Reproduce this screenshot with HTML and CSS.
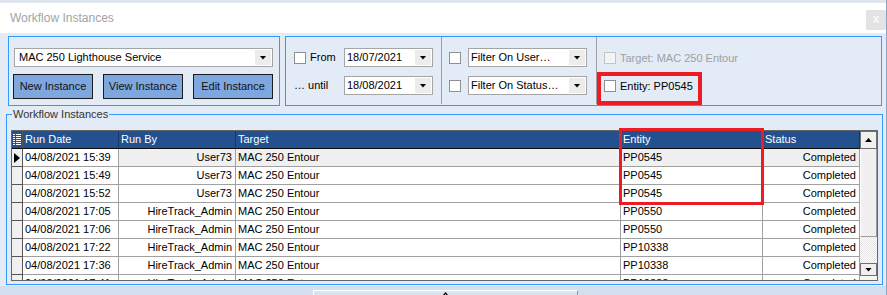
FILE: index.html
```html
<!DOCTYPE html>
<html>
	<head>
		<title>Workflow Instances</title>
		<link rel="stylesheet" href="styles.css">
	</head>
	<body>
		<div class="window">
			<div class="titlebar">
				<span class="title">Workflow Instances</span>
				<span class="closebtn">x</span>
			</div>
			<div class="toolbar">
				<div class="panel template">
					<div class="combo wide"><span>MAC 250 Lighthouse Service</span><i class="drop"></i></div>
					<div class="buttons">
						<button>New Instance</button>
						<button>View Instance</button>
						<button>Edit Instance</button>
					</div>
				</div>
				<div class="panel filters">
					<div class="section dates">
						<div class="frow">
							<span class="lead"><i class="check"></i>From</span>
							<div class="combo date"><span>18/07/2021</span><i class="drop"></i></div>
						</div>
						<div class="frow">
							<span class="lead">&hellip; until</span>
							<div class="combo date"><span>18/08/2021</span><i class="drop"></i></div>
						</div>
					</div>
					<div class="section users">
						<div class="frow">
							<i class="check"></i>
							<div class="combo pick"><span>Filter On User&hellip;</span><i class="drop"></i></div>
						</div>
						<div class="frow">
							<i class="check"></i>
							<div class="combo pick"><span>Filter On Status&hellip;</span><i class="drop"></i></div>
						</div>
					</div>
					<div class="section scope">
						<div class="crow disabled"><i class="check"></i>Target: MAC 250 Entour</div>
						<div class="marked">
							<div class="crow"><i class="check"></i>Entity: PP0545</div>
						</div>
					</div>
				</div>
			</div>
			<div class="groupbox">
				<span class="legend">Workflow Instances</span>
				<div class="grid">
					<div class="cells">
						<div class="row head">
							<div class="ind">
								<svg width="8" height="11" viewBox="0 0 8 11"><g fill="#fff"><rect x="0" y="0" width="2" height="1"/><rect x="3" y="0" width="5" height="1"/><rect x="0" y="2" width="2" height="1"/><rect x="3" y="2" width="5" height="1"/><rect x="0" y="4" width="2" height="1"/><rect x="3" y="4" width="5" height="1"/><rect x="0" y="6" width="2" height="1"/><rect x="3" y="6" width="5" height="1"/><rect x="0" y="8" width="2" height="1"/><rect x="3" y="8" width="5" height="1"/><rect x="0" y="10" width="2" height="1"/><rect x="3" y="10" width="5" height="1"/></g></svg>
							</div>
							<div>Run Date</div><div>Run By</div><div>Target</div><div>Entity</div><div>Status</div>
						</div>
						<div class="row current">
							<div class="ind"><svg width="6" height="10" viewBox="0 0 6 10"><polygon points="0,0 6,5 0,10" fill="#000"/></svg></div>
							<div class="focus">04/08/2021 15:39</div><div class="num">User73</div><div>MAC 250 Entour</div><div>PP0545</div><div class="num">Completed</div>
						</div>
						<div class="row">
							<div class="ind"></div>
							<div>04/08/2021 15:49</div><div class="num">User73</div><div>MAC 250 Entour</div><div>PP0545</div><div class="num">Completed</div>
						</div>
						<div class="row">
							<div class="ind"></div>
							<div>04/08/2021 15:52</div><div class="num">User73</div><div>MAC 250 Entour</div><div>PP0545</div><div class="num">Completed</div>
						</div>
						<div class="row">
							<div class="ind"></div>
							<div>04/08/2021 17:05</div><div class="num">HireTrack_Admin</div><div>MAC 250 Entour</div><div>PP0550</div><div class="num">Completed</div>
						</div>
						<div class="row">
							<div class="ind"></div>
							<div>04/08/2021 17:06</div><div class="num">HireTrack_Admin</div><div>MAC 250 Entour</div><div>PP0550</div><div class="num">Completed</div>
						</div>
						<div class="row">
							<div class="ind"></div>
							<div>04/08/2021 17:22</div><div class="num">HireTrack_Admin</div><div>MAC 250 Entour</div><div>PP10338</div><div class="num">Completed</div>
						</div>
						<div class="row">
							<div class="ind"></div>
							<div>04/08/2021 17:36</div><div class="num">HireTrack_Admin</div><div>MAC 250 Entour</div><div>PP10338</div><div class="num">Completed</div>
						</div>
						<div class="row">
							<div class="ind"></div>
							<div>04/08/2021 17:41</div><div class="num">HireTrack_Admin</div><div>MAC 250 Entour</div><div>PP10338</div><div class="num">Completed</div>
						</div>
					</div>
					<div class="scrollbar">
						<div class="sb-btn"><i class="tri up"></i></div>
						<div class="sb-thumb"></div>
						<div class="sb-track"></div>
						<div class="sb-btn down"><i class="tri"></i></div>
						<div class="sb-end"></div>
					</div>
					<div class="mark"></div>
				</div>
			</div>
			<div class="footer">
				<div class="splitter">
					<svg width="7" height="5" viewBox="0 0 7 5"><polyline points="0.5,4.5 3.5,1 6.5,4.5" fill="none" stroke="#000" stroke-width="1.2"/></svg>
				</div>
			</div>
		</div>
		<div class="behind"></div>
	</body>
</html>
```
FILE: styles.css
```css
body {
	margin: 0;
	display: flex;
	height: 295px;
	overflow: hidden;
	background: #f2f4f7;
	font: 11px/13px "Liberation Sans", Arial, sans-serif;
	color: #000;
}
.window {
	width: 886px;
	display: flex;
	flex-direction: column;
	background: #e3ebf6;
}
.behind {
	flex-grow: 1;
	border-left: 1px solid #8da4c0;
	background: #eef1f5;
}

/* title bar */
.titlebar {
	height: 30px;
	border-top: 3px solid #dfe5ec;
	background: #fff;
	display: flex;
	justify-content: space-between;
	padding-left: 10px;
}
.title {
	font-size: 12px;
	line-height: 30px;
	color: #a3a3a3;
}
.closebtn {
	width: 20px;
	height: 20px;
	margin-top: 7px;
	background: #e3e3e3;
	color: #fafafa;
	font-weight: bold;
	font-size: 12px;
	line-height: 19px;
	text-align: center;
}

/* top filter panels */
.toolbar {
	display: flex;
	gap: 5px;
	padding: 3px 0 0 8px;
}
.panel {
	box-sizing: border-box;
	height: 70px;
	border: 1px solid #3399ff;
}
.template {
	width: 272px;
	padding: 11px 6px 0 4px;
}
.combo {
	display: flex;
	align-items: center;
	box-sizing: border-box;
	height: 19px;
	border: 1px solid #a5a5a5;
	background: #fff;
}
.combo span {
	flex-grow: 1;
	padding-left: 2px;
	white-space: nowrap;
	overflow: hidden;
}
.combo.wide {
	margin-left: 1px;
}
.combo.wide span {
	padding-left: 4px;
}
.drop {
	width: 16px;
	height: 15px;
	margin-right: 1px;
	background: #ececec;
	display: flex;
	align-items: center;
	justify-content: center;
}
.drop::after, .tri {
	content: "";
	display: block;
	width: 7px;
	height: 4px;
	background: #000;
	clip-path: polygon(0 0, 100% 0, 50% 100%);
}
.tri.up {
	clip-path: polygon(50% 0, 100% 100%, 0 100%);
}
.buttons {
	display: flex;
	gap: 10px;
	margin-top: 7px;
}
.buttons button {
	width: 80px;
	height: 25px;
	padding: 0;
	border: 1px solid #1c1c1c;
	background: #7ea6df;
	color: #111;
	font: inherit;
}
.filters {
	width: 597px;
	display: flex;
}
.section {
	box-sizing: border-box;
	height: 67px;
}
.dates {
	width: 156px;
	padding: 11px 0 0 8px;
	border-right: 1px solid #a0a0a0;
}
.users {
	width: 155px;
	padding: 11px 0 0 7px;
	border-right: 1px solid #a0a0a0;
}
.frow {
	display: flex;
	align-items: center;
	height: 19px;
}
.frow + .frow {
	margin-top: 9px;
}
.lead {
	width: 50px;
	display: flex;
	align-items: center;
}
.check {
	display: block;
	box-sizing: border-box;
	width: 12px;
	height: 12px;
	border: 1px solid #8e8f8f;
	background: #fff;
	margin-right: 4px;
}
.users .check {
	margin-right: 7px;
}
.combo.date {
	width: 89px;
}
.combo.pick {
	width: 119px;
}
.scope {
	flex-grow: 1;
	padding-top: 15px;
}
.crow {
	display: flex;
	align-items: center;
	height: 12px;
	padding-left: 7px;
}
.crow.disabled {
	color: #a0a0a0;
}
.crow.disabled .check {
	border-color: #c4c4c4;
	background: #f4f4f4;
}
.marked {
	box-sizing: border-box;
	width: 105px;
	height: 33px;
	margin-top: 8px;
	border: 4px solid #ec1c24;
	padding-top: 4px;
}
.marked .crow {
	padding-left: 3px;
}

/* group box with grid */
.groupbox {
	position: relative;
	box-sizing: border-box;
	width: 877px;
	height: 171px;
	margin: 8px 0 0 6px;
	border: 1px solid #3399ff;
	padding: 15px 4px 3px 4px;
}
.legend {
	position: absolute;
	left: 5px;
	top: -7px;
	padding: 0 1px;
	background: #e3ebf6;
	color: #333;
}
.grid {
	position: relative;
	display: flex;
	box-sizing: border-box;
	width: 867px;
	height: 151px;
	border: 1px solid #666;
	background: #fff;
}
.cells {
	width: 848px;
	overflow: hidden;
}
.row {
	display: grid;
	grid-template-columns: 11px 96px 117px 385px 142px 97px;
	height: 18px;
}
.row > div {
	box-sizing: border-box;
	padding: 0 2px;
	border-right: 1px solid #a0a0a0;
	border-bottom: 1px solid #a0a0a0;
	line-height: 17px;
	white-space: nowrap;
	overflow: hidden;
}
.row > .num {
	text-align: right;
	padding-right: 3px;
}
.row > .ind {
	padding: 0;
	background: #f0f0f0;
	border-color: #555;
	display: flex;
	align-items: center;
	justify-content: center;
}
.head > div {
	background: #23508f;
	color: #fff;
	border-right-color: #17386b;
	border-bottom-color: #0d0d0d;
}
.head > .ind {
	background: #23508f;
	border-bottom-color: #0d0d0d;
}
.current > div {
	background: #f0f0f0;
}
.current > .focus {
	background: #fff;
}
.scrollbar {
	width: 17px;
	display: flex;
	flex-direction: column;
}
.sb-btn {
	box-sizing: border-box;
	height: 18px;
	border: 1px solid #6f6f6f;
	background: #f0f0f0;
	display: flex;
	align-items: center;
	justify-content: center;
}
.sb-btn.down {
	height: 13px;
}
.sb-thumb {
	box-sizing: border-box;
	height: 88px;
	background: #f0f0f0;
	border-left: 1px solid #fff;
	border-right: 1px solid #9a9a9a;
	border-bottom: 1px solid #9a9a9a;
}
.sb-track {
	flex-grow: 1;
	background: repeating-conic-gradient(#e4e4e4 0 25%, #fff 0 50%) 0 0 / 2px 2px;
}
.sb-end {
	height: 4px;
	background: #f6f6f6;
}
.mark {
	position: absolute;
	left: 607px;
	top: -3px;
	box-sizing: border-box;
	width: 145px;
	height: 77px;
	border: 3px solid #ec1c24;
}

/* splitter strip at the bottom */
.footer {
	height: 10px;
	margin-top: 1px;
	background: #d3dfee;
	overflow: hidden;
}
.splitter {
	box-sizing: border-box;
	width: 265px;
	height: 12px;
	margin: 4px 0 0 313px;
	border: 1px solid #fff;
	border-right-color: #9a9a9a;
	background: linear-gradient(180deg, #dfe8f0 0%, #c3d3e2 100%);
	display: flex;
	justify-content: center;
	padding-top: 1px;
}
```
